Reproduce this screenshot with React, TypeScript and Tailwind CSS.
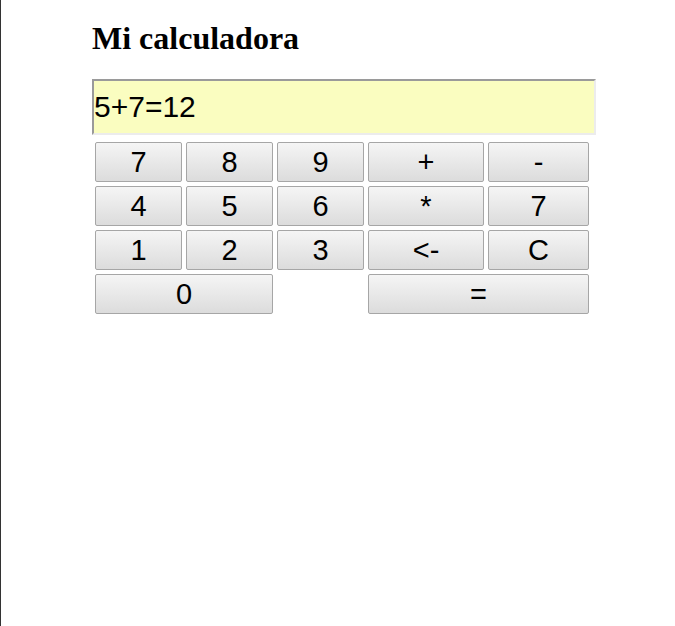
import React from 'react';

const Key = ({ label, className = '' }: { label: string; className?: string }) => (
  <button className={`h-10 rounded-[2px] border border-[#a6a6a6] bg-gradient-to-b from-[#f5f5f5] to-[#dcdcdc] text-[29px] leading-none text-black ${className}`}>
    {label}
  </button>
);

export default function App() {
  const keys = [
    ['7', '8', '9', '+', '-'],
    ['4', '5', '6', '*', '7'],
    ['1', '2', '3', '<-', 'C'],
  ];
  return (
    <div className="min-h-[626px] border-l border-[#333] bg-white pl-[91px] pt-5 font-['Liberation_Sans',Arial,sans-serif]">
      <h1 className="font-['Liberation_Serif','Times_New_Roman',serif] text-[32px] font-bold leading-9 text-black">
        Mi calculadora
      </h1>
      <input
        readOnly
        value="5+7=12"
        className="mt-[23px] block h-[56px] w-[504px] border-2 border-t-[#9a9a9a] border-l-[#9a9a9a] border-b-[#ececec] border-r-[#ececec] bg-[#fafdc0] px-0 text-[30px] text-black outline-none"
      />
      <div className="ml-[3px] mt-[7px] grid grid-cols-[87px_87px_87px_116px_101px] gap-1">
        {keys.flat().map((k, i) => (
          <Key key={i} label={k} />
        ))}
        <Key label="0" className="col-span-2" />
        <div />
        <Key label="=" className="col-span-2" />
      </div>
    </div>
  );
}
